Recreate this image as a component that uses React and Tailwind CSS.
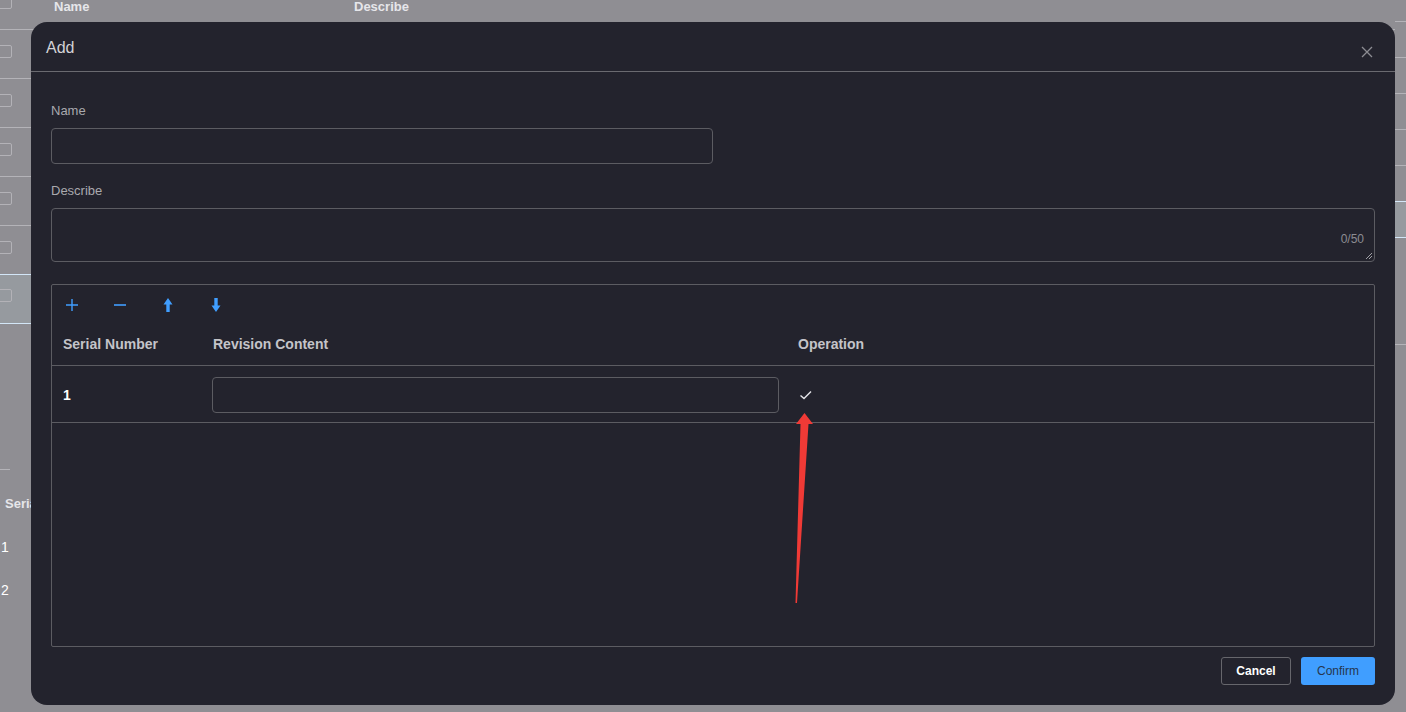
import React from "react";

const font = { fontFamily: '"Liberation Sans", Arial, sans-serif' };

function Checkbox() {
  return <div className="w-[14px] h-[13px] -ml-[2px] rounded-[2px] border border-[#b3b2b7]" />;
}

function BgRow() {
  return (
    <div className="h-[49px] flex items-center border-b border-[#b4b3b8]">
      <div className="-mt-[6px]">
        <Checkbox />
      </div>
    </div>
  );
}

function RightRow() {
  return <div className="h-[36px] border-b border-[#b4b3b8]" />;
}

export default function App() {
  return (
    <div
      className="relative w-[1406px] h-[712px] overflow-hidden bg-[#8f8e93] flex"
      style={font}
    >
      {/* background page */}
      <div className="flex-1 flex flex-col">
        <div className="h-[30px] border-b border-[#b4b3b8] flex items-start">
          <div className="-mt-[4px]">
            <Checkbox />
          </div>
          <div className="ml-[42px] w-[300px] text-[13px] font-bold text-[#e6e6ea] leading-[13px]">Name</div>
          <div className="text-[13px] font-bold text-[#e6e6ea] leading-[13px]">Describe</div>
        </div>
        <BgRow />
        <BgRow />
        <BgRow />
        <BgRow />
        <BgRow />
        <div className="h-[50px] bg-[#969a9f] border-y border-[#d3e6f7] flex items-center -mt-[1px]">
          <div className="-mt-[8px]">
            <Checkbox />
          </div>
        </div>
        <div className="h-[145px]" />
        <div className="w-[10px] border-b border-[#b4b3b8]" />
        <div className="pl-[5px] mt-[26px] text-[13px] font-bold text-[#e6e6ea] leading-[16px]">Serial</div>
        <div className="pl-[1px] mt-[27px] text-[14px] text-white leading-[16px]">1</div>
        <div className="pl-[1px] mt-[27px] text-[14px] text-white leading-[16px]">2</div>
      </div>
      <div className="w-[11px] flex flex-col">
        <div className="h-[22px] border-b border-[#b4b3b8]" />
        <RightRow />
        <RightRow />
        <RightRow />
        <RightRow />
        <RightRow />
        <div className="h-[37px] bg-[#969a9f] border-y border-[#d3e6f7] -mt-[1px]" />
        <div className="h-[107px] border-b border-[#b4b3b8]" />
      </div>

      {/* modal */}
      <div className="absolute left-[31px] top-[22px] w-[1364px] h-[683px] rounded-[16px] bg-[#23232d] flex flex-col">
        <div className="h-[50px] border-b border-[#6a6a70] flex items-center px-[15px] shrink-0">
          <div className="text-[16px] text-[#d2d2d6] mt-[2px]">Add</div>
          <div className="ml-auto mr-[7px] mt-[10px]">
            <svg width="12" height="12" viewBox="0 0 12 12">
              <path d="M1 1L11 11M11 1L1 11" stroke="#8c8c92" strokeWidth="1.3" />
            </svg>
          </div>
        </div>
        <div className="flex flex-col px-[20px] pt-[31px] pb-[20px] flex-1">
          <div className="text-[13px] leading-[16px] text-[#a9a9ae]">Name</div>
          <div className="mt-[9px] w-[662px] h-[36px] rounded-[4px] border border-[#5c5c62]" />
          <div className="mt-[19px] text-[13px] leading-[16px] text-[#a9a9ae]">Describe</div>
          <div className="relative mt-[9px] h-[54px] rounded-[4px] border border-[#5c5c62]">
            <div className="absolute right-[10px] top-[23px] text-[12px] leading-[14px] text-[#8c8c92]">0/50</div>
            <svg className="absolute right-[1px] bottom-[1px]" width="8" height="8" viewBox="0 0 8 8">
              <path d="M1 7L7 1M4 7L7 4" stroke="#a0a0a6" strokeWidth="1" />
            </svg>
          </div>
          <div className="mt-[22px] h-[363px] border border-[#5c5c62] rounded-[2px] flex flex-col">
            <div className="h-[39px] flex items-center pl-[13px] gap-[34px]">
              <svg width="14" height="14" viewBox="0 0 14 14">
                <path d="M7 1V13M1 7H13" stroke="#409eff" strokeWidth="1.4" />
              </svg>
              <svg width="14" height="14" viewBox="0 0 14 14">
                <path d="M1 7H13" stroke="#409eff" strokeWidth="1.6" />
              </svg>
              <svg width="14" height="16" viewBox="0 0 14 16">
                <path d="M7 1L11.5 7.5H8.7V15H5.3V7.5H2.5Z" fill="#409eff" />
              </svg>
              <svg width="14" height="16" viewBox="0 0 14 16">
                <path d="M7 15L11.5 8.5H8.7V1H5.3V8.5H2.5Z" fill="#409eff" />
              </svg>
            </div>
            <div className="h-[42px] flex items-center border-b border-[#5c5c62] text-[14px] font-bold text-[#c4c4c9]">
              <div className="w-[150px] pl-[11px]">Serial Number</div>
              <div className="w-[585px] pl-[11px]">Revision Content</div>
              <div className="pl-[11px]">Operation</div>
            </div>
            <div className="h-[57px] flex items-center border-b border-[#5c5c62] text-[14px] pt-[2px]">
              <div className="w-[150px] pl-[11px] font-bold text-white">1</div>
              <div className="w-[585px] pl-[10px] pr-[8px]">
                <div className="h-[36px] rounded-[4px] border border-[#5c5c62]" />
              </div>
              <div className="pl-[12px]">
                <svg width="14" height="12" viewBox="0 0 14 12">
                  <path d="M1.5 6.5L5 9.5L12 2.5" stroke="#e4e4e8" strokeWidth="1.5" fill="none" />
                </svg>
              </div>
            </div>
          </div>
          <div className="mt-[10px] flex justify-end gap-[10px]">
            <div className="w-[70px] h-[28px] rounded-[3px] border border-[#66666c] flex items-center justify-center text-[12px] font-bold text-white">
              Cancel
            </div>
            <div className="w-[74px] h-[28px] rounded-[3px] bg-[#409eff] flex items-center justify-center text-[12px] text-[#26364d]">
              Confirm
            </div>
          </div>
        </div>
      </div>

      {/* red annotation arrow */}
      <svg className="absolute left-0 top-0 pointer-events-none" width="1406" height="712" viewBox="0 0 1406 712">
        <polygon
          points="804.5,413 813,424 808.5,424 797,603 795.5,603 800.5,424 796,424"
          fill="#f03a36"
        />
      </svg>
    </div>
  );
}
